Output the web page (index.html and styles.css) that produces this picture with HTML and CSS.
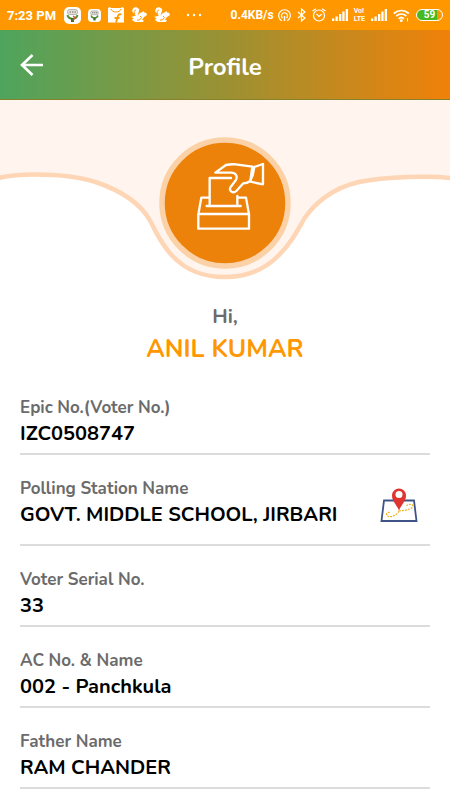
FILE: index.html
```html
<!DOCTYPE html>
<html lang="en">
<head>
<meta charset="utf-8">
<meta name="viewport" content="width=device-width, initial-scale=1">
<title>Profile</title>
<link rel="stylesheet" href="styles.css">
</head>
<body>
<div class="status">
  <div class="status-group notices">
    <span class="clock">7:23 PM</span>
    <svg width="17" height="17" viewBox="0 0 17 17"><rect width="17" height="17" rx="5" fill="#fff"/><rect x="3.500" y="2.500" width="10" height="5" rx="2" fill="#e4e2dc" stroke="#aaa69b" stroke-width=".8"/><path d="M5.500 5h1.500M8 5h1.500M10.500 5h1.500" stroke="#6d6a62" stroke-width="1.200"/><path d="M3.500 8c.5 3 2 3.500 5 4 3-.5 4.500-1.500 5-4" fill="none" stroke="#5b8d3a" stroke-width="2"/><path d="M7 11h3v4H7z" fill="#3e6f2f"/><path d="M9 9l2 1.500-2 3" fill="none" stroke="#d75b31" stroke-width="1.200"/></svg>
    <svg width="13" height="13" viewBox="0 0 17 17"><rect width="17" height="17" rx="5" fill="#fff"/><rect x="3.500" y="2.500" width="10" height="5" rx="2" fill="#e4e2dc" stroke="#aaa69b"/><path d="M5.500 5h1.500M8 5h1.500M10.500 5h1.500" stroke="#6d6a62" stroke-width="1.400"/><path d="M4 8.500c.5 3 2 3 4.500 3.500 2.500-.5 4-1 4.500-3.500" fill="none" stroke="#5b8d3a" stroke-width="2"/><path d="M7 11h3v4H7z" fill="#3e6f2f"/></svg>
    <svg width="16" height="16" viewBox="0 0 16 16"><path d="M0 1l2-1 1 1h10l1-1 2 1v14.500H0z" fill="#fff"/><path d="M3 2c1 4 9 4 10 0" fill="none" stroke="#ff9800"/><path d="M13.500 7.500c-3-1-3.500 1-4 3l-1.500 5M6.500 11h5" fill="none" stroke="#ff9800" stroke-width="1.800"/></svg>
    <svg width="16" height="16" viewBox="0 0 16 16"><path d="M6 .5C3-.5.5 2 1.500 5L5 8.500 0 10l2.500 1L1 13l3 2h8l1-1.500-2-.5 2-3 2.500-1.500c1-2-.5-3-2.500-3L12.500 4l-2 1.500C8 6 7 7.500 7 9 6 7 9 4 8 2z" fill="#fff"/><path d="M4 7C2.500 5.500 3 3.500 5 3M9 9l1.500 1.500-2 2.500H6" fill="none" stroke="#ff9800"/></svg>
    <svg width="16" height="16" viewBox="0 0 16 16"><path d="M6 .5C3-.5.5 2 1.500 5L5 8.500 0 10l2.500 1L1 13l3 2h8l1-1.500-2-.5 2-3 2.500-1.500c1-2-.5-3-2.500-3L12.500 4l-2 1.500C8 6 7 7.500 7 9 6 7 9 4 8 2z" fill="#fff"/><path d="M4 7C2.500 5.500 3 3.500 5 3M9 9l1.500 1.500-2 2.500H6" fill="none" stroke="#ff9800"/></svg>
    <svg class="more" width="16" height="4" viewBox="0 0 16 4" fill="#fff"><circle cx="2" cy="2" r="1.200"/><circle cx="8" cy="2" r="1.200"/><circle cx="14" cy="2" r="1.200"/></svg>
  </div>
  <div class="status-group system">
    <span class="rate">0.4KB/s</span>
    <svg width="13" height="13" viewBox="0 0 13 13" fill="none" stroke="#fff" stroke-width="1.200"><path d="M4 11.800a5.800 5.800 0 1 1 5 0M4.500 9a3 3 0 1 1 4 0"/><path d="M6.500 7v5" stroke-width="1.400"/></svg>
    <svg width="9" height="14" viewBox="0 0 9 14" fill="none" stroke="#fff" stroke-width="1.200"><path d="M1 4l7 6-3.500 3V1L8 4l-7 6"/></svg>
    <svg width="14" height="14" viewBox="0 0 14 14" fill="none" stroke="#fff" stroke-width="1.200"><circle cx="7" cy="7.500" r="5.500"/><path d="M4.500 6L7 8.500 10 6M.5 3L4 .7M10 .7L13.500 3"/></svg>
    <svg width="16" height="12" viewBox="0 0 16 12" fill="#fff"><path d="M0 9.500h2.300V12H0zM3.500 7.500h2.300V12H3.500zM7 5h2.300v7H7zM10.300 2.500h2.300V12h-2.300zM13.700 0H16v12h-2.300z"/></svg>
    <span class="volte"><span>Vo!</span><span>LTE</span></span>
    <svg width="16" height="12" viewBox="0 0 16 12" fill="#fff"><path d="M0 9.500h2.300V12H0zM3.500 7.500h2.300V12H3.500zM7 5h2.300v7H7zM10.300 2.500h2.300V12h-2.300zM13.700 0H16v12h-2.300z"/></svg>
    <svg width="17" height="13" viewBox="0 0 17 13" fill="none" stroke="#fff" stroke-width="1.700"><path d="M.8 4.500c4.500-4 10.500-4 15 0M3.200 7.200c3-2.800 7.200-2.800 10.200 0M5.700 9.800c1.500-1.500 3.700-1.500 5.200 0"/><circle cx="8.300" cy="11.600" r=".6"/><path d="M14.500 9v3.500" stroke-width="1"/></svg>
    <span class="battery">59</span>
  </div>
</div>

<header class="bar">
  <button class="back" type="button" aria-label="Back"><svg width="24" height="24" viewBox="0 0 24 24" fill="none" stroke="#fff" stroke-width="2.600" stroke-linejoin="miter"><path d="M12.500 2L2 12l10.500 10M2 12h21"/></svg></button>
  <h1>Profile</h1>
</header>

<main>
  <svg class="hero" viewBox="0 0 450 184" aria-hidden="true">
    <path d="M-4 78.500C12 74.500 25 74.500 35 74.500c25 0 44 2 62 8 26 9 44 22 53 38 7 13 10 22 22 35 15 16 32 21.500 53 21.500s39-7 53-21c13-13 18-23 26-37 10-15 28-31 55-37 25-5 73-7 95-3.500V-6H-4z" fill="#fff5ee" stroke="#fed5b5" stroke-width="4.500"/>
    <circle cx="225" cy="103" r="63" fill="#ed820a" stroke="#fbd2a8" stroke-width="5.500"/>
    <g transform="translate(0 50) scale(.33333)" fill="none" stroke="#fff" stroke-width="7" stroke-linecap="round" stroke-linejoin="round">
      <path d="M620 168h102M629 166V84h64M712 138v28M626 143h-22l-9 50v43h152v-43l-9-50h-22M595 192h152"/>
      <path d="M757 50l-50-7c-12-1-20 0-29 2l-32 23h47c15 0 21 11 14 23l-15 20c-7 12 7 21 17 12l21-23c8 0 14-2 21-7zM763 51l26-9v61l-38-8M763 51l-5 25-8 18"/>
    </g>
  </svg>

  <section class="greeting">
    <p>Hi,</p>
    <h2>ANIL KUMAR</h2>
  </section>

  <dl class="details">
    <div class="row"><dt>Epic No.(Voter No.)</dt><dd>IZC0508747</dd></div>
    <div class="row station">
      <div><dt>Polling Station Name</dt><dd>GOVT. MIDDLE SCHOOL, JIRBARI</dd></div>
      <dd><button class="map" type="button" aria-label="Open map"><svg width="38" height="36" viewBox="0 0 38 36"><path d="M4 13.500h30L36.500 34h-35z" fill="#fff" stroke="#3f5486" stroke-width="1.800"/><path d="M19 24c-2 5-12 8-12.500 3.500C6.300 25.500 8.500 25 10 25.500M19 24l6-.7c8-1 9-5 6.500-5.800-1.800-.5-3.500.2-5 1" fill="none" stroke="#efb321" stroke-width="1.200" stroke-dasharray="2 1"/><path d="M19 24c-1-5-7-9-7-15.500a7 7 0 0 1 14 0C26 15 20 19 19 24z" fill="#df3430"/><circle cx="19" cy="7.500" r="3.500" fill="#fff"/></svg></button></dd>
    </div>
    <div class="row"><dt>Voter Serial No.</dt><dd>33</dd></div>
    <div class="row"><dt>AC No. &amp; Name</dt><dd>002 - Panchkula</dd></div>
    <div class="row"><dt>Father Name</dt><dd>RAM CHANDER</dd></div>
  </dl>
</main>
</body>
</html>
```
FILE: styles.css
```css
* { box-sizing: border-box; }
body, h1, h2, p, dl, dd { margin: 0; }
body {
  background: #fff;
  color: #000;
  font-family: Nunito, Lato, "Open Sans", sans-serif;
  font-weight: 700;
}
svg { display: block; flex: none; }
button { border: 0; padding: 0; background: none; }

.status {
  display: flex;
  justify-content: space-between;
  align-items: center;
  height: 30px;
  padding: 0 7px;
  background: #ff9800;
  color: #fff;
  font-family: Roboto, sans-serif;
  font-weight: 500;
}
.status-group { display: flex; align-items: center; }
.notices { gap: 7px; }
.system { gap: 6px; }
.clock { font-size: 13px; margin-right: 1px; font-weight: 700; }
.more { margin-left: 9px; }
.rate { font-size: 12px; font-weight: 700; margin-right: -2px; }
.volte {
  display: flex;
  flex-direction: column;
  font-size: 7px;
  line-height: 8px;
  font-weight: 700;
}
.battery {
  width: 27px;
  height: 12px;
  border: 1px solid #fff;
  border-radius: 6px;
  background: linear-gradient(90deg, #48b820 80%, #ff9800 80%);
  font-size: 10px;
  line-height: 10px;
  font-weight: 700;
  text-align: center;
}

.bar {
  display: grid;
  grid-template-columns: 24px 1fr 24px;
  align-items: center;
  height: 70px;
  padding: 0 20px;
  border-bottom: 1px solid #87812a;
  background: linear-gradient(90deg, #4ea45d, #9b9133 50%, #f08109);
  color: #fff;
}
.bar h1 {
  font-size: 24px;
  line-height: 32px;
  font-weight: 700;
  text-align: center;
  padding-top: 4px;
}

.hero { width: 100%; }

.greeting { padding-top: 18px; text-align: center; }
.greeting p { color: #6b6b6b; font-size: 20px; line-height: 30px; }
.greeting h2 { color: #ff9800; font-size: 25px; line-height: 34px; }

.details { padding: 8px 20px; }
.row { padding: 21px 0 6px; border-bottom: 2px solid #dcdcdc; }
.row dt { color: #6b6b6b; font-size: 17px; line-height: 26px; }
.row dd { font-size: 20px; line-height: 26px; }
.station {
  display: flex;
  justify-content: space-between;
  align-items: flex-end;
  padding-bottom: 16px;
}
.map { display: block; margin: 0 12px 5px 0; }
```
